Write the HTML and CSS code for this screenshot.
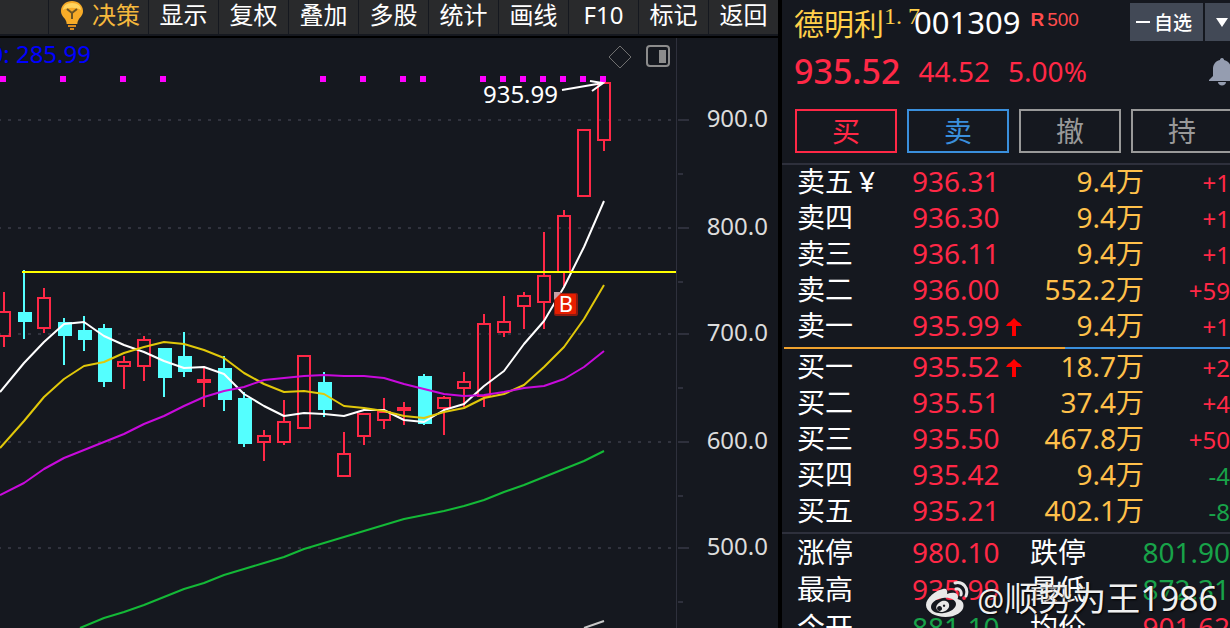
FILE: index.html
```html
<!DOCTYPE html>
<html lang="zh-CN">
<head>
    <meta charset="UTF-8">
    <meta name="viewport" content="width=device-width, initial-scale=1.0">
    <title>德明利 001309</title>
    <link rel="stylesheet" href="styles.css">
</head>
<body>
    <div class="app">
        <main class="chart-pane">
            <nav class="toolbar">
                <span class="toolbar-blank"></span>
                <button class="toolbar-idea">
                    <svg class="bulb" viewBox="0 0 22 30" aria-hidden="true">
                        <path d="M11 1C5 1 0 5 0 11c0 4 2.500 6 4 8 1 1.500 1.500 3 1.700 5h10.600c.2-2 .7-3.500 1.700-5 1.500-2 4-4 4-8C22 5 17 1 11 1z" fill="#f7ab28"/>
                        <path d="M2 10c0-4 3-7 9-7s9 3 9 7c-4-3-14-3-18 0z" fill="#ffd45e"/>
                        <path d="M6 9l5 4 5-4M11 13v6" fill="none" stroke="#6b5424" stroke-width="2"/>
                        <path d="M7 25h8v2H7zM9 28h4v2H9z" fill="#d98a1e"/>
                    </svg>
                    决策
                </button>
                <button>显示</button>
                <button>复权</button>
                <button>叠加</button>
                <button>多股</button>
                <button>统计</button>
                <button>画线</button>
                <button>F10</button>
                <button>标记</button>
                <button>返回</button>
            </nav>

            <svg class="chart" viewBox="0 38 778 590">
                <g class="grid">
                    <path d="M-2 120H676M-2 228H676M-2 334H676M-2 442H676M-2 548H676"/>
                </g>
                <g class="axis">
                    <path d="M676 38V628"/>
                    <path class="tick" d="M678 120h11M678 228h11M678 334h11M678 442h11M678 548h11M678 174h5M678 282h5M678 388h5M678 496h5M678 602h5"/>
                </g>
                <g class="axis-labels">
                    <text x="768" y="127">900.0</text>
                    <text x="768" y="235">800.0</text>
                    <text x="768" y="341">700.0</text>
                    <text x="768" y="449">600.0</text>
                    <text x="768" y="555">500.0</text>
                </g>
                <g id="candles"></g>
                <g id="averages"></g>
                <path class="level-line" d="M22 272H676"/>
                <g id="signals"></g>

                <text class="indicator" x="91" y="63">0: 285.99</text>
                <text class="peak" x="558" y="103">935.99</text>
                <path class="peak-arrow" d="M562 90L603 83M590 81L603 83L592 91"/>

                <path class="tool-icon" d="M620 46L631 57L620 68L609 57z"/>
                <rect class="tool-icon tool-box" x="647" y="46" width="22" height="20" rx="3"/>
                <rect x="659" y="50" width="7" height="13" fill="#8c8c8c"/>

                <rect x="554" y="293" width="24" height="23" rx="2" fill="#8c1a10"/>
                <rect x="555" y="294" width="21" height="20" rx="1" fill="#e61e00"/>
                <path d="M554 292h8l-8 8z" fill="#c8a0a4"/>
                <text class="buy-mark" x="566" y="312">B</text>
            </svg>
        </main>

        <aside class="quote">
            <header class="quote-head">
                <span class="stock-name">德明利<sup>1. 7</sup></span>
                <span class="stock-code">001309</span>
                <span class="badge"><b>R</b>500</span>
                <div class="watch">
                    <button class="watch-btn"><i></i>自选</button>
                    <button class="watch-more" aria-label="更多">
                        <svg viewBox="0 0 12 10"><path d="M0 1h12L6 10z" fill="#fff"/></svg>
                    </button>
                </div>
            </header>
            <div class="quote-price">
                <strong>935.52</strong>
                <span>44.52</span>
                <span>5.00%</span>
                <svg class="bell" viewBox="0 0 26 28" aria-hidden="true">
                    <path d="M13 0c-1.500 0-2 1-2 2-5 1-7 5-7 9v7l-4 4v1h26v-1l-4-4v-7c0-4-2-8-7-9 0-1-.5-2-2-2zM9 24h8c0 2-2 3.500-4 3.500S9 26 9 24z" fill="#959db0"/>
                </svg>
            </div>
            <div class="trade">
                <button class="buy">买</button>
                <button class="sell">卖</button>
                <button>撤</button>
                <button>持</button>
            </div>

            <table class="book">
                <tr><th>卖五<small>¥</small></th><td class="price">936.31</td><td class="vol">9.4万</td><td class="chg">+1</td></tr>
                <tr><th>卖四</th><td class="price">936.30</td><td class="vol">9.4万</td><td class="chg">+1</td></tr>
                <tr><th>卖三</th><td class="price">936.11</td><td class="vol">9.4万</td><td class="chg">+1</td></tr>
                <tr><th>卖二</th><td class="price">936.00</td><td class="vol">552.2万</td><td class="chg">+59</td></tr>
                <tr><th>卖一</th><td class="price">935.99<svg class="up" viewBox="0 0 16 18"><path d="M8 0l2 2 2 2 2 1 2 3h-6v10H6V8H0l2-3 2-1 2-2z"/></svg></td><td class="vol">9.4万</td><td class="chg">+1</td></tr>
            </table>
            <div class="ratio"><span></span></div>
            <table class="book">
                <tr><th>买一</th><td class="price">935.52<svg class="up" viewBox="0 0 16 18"><path d="M8 0l2 2 2 2 2 1 2 3h-6v10H6V8H0l2-3 2-1 2-2z"/></svg></td><td class="vol">18.7万</td><td class="chg">+2</td></tr>
                <tr><th>买二</th><td class="price">935.51</td><td class="vol">37.4万</td><td class="chg">+4</td></tr>
                <tr><th>买三</th><td class="price">935.50</td><td class="vol">467.8万</td><td class="chg">+50</td></tr>
                <tr><th>买四</th><td class="price">935.42</td><td class="vol">9.4万</td><td class="chg down">-4</td></tr>
                <tr><th>买五</th><td class="price">935.21</td><td class="vol">402.1万</td><td class="chg down">-8</td></tr>
            </table>

            <table class="stats">
                <tr><th>涨停</th><td>980.10</td><th>跌停</th><td class="down">801.90</td></tr>
                <tr><th>最高</th><td>935.99</td><th>最低</th><td class="down">872.31</td></tr>
                <tr><th>今开</th><td class="down">881.10</td><th>均价</th><td>901.62</td></tr>
            </table>
        </aside>

        <div class="watermark">
            <svg viewBox="0 0 44 36" aria-hidden="true">
                <path fill="#e8e8e8" fill-rule="evenodd" d="M18 8c3-1 5 1 4 5 5-2 11-2 11 3 0 1-.5 2-.5 2 4 1 6 3 6 7 0 6-8 11-18 11S1 31 1 24C1 17 11 9 18 8zM18 17c-8 1-12 5-12 9s5 7 13 6c7-1 12-5 12-9s-6-7-13-6z"/>
                <path fill="#e8e8e8" fill-rule="evenodd" d="M17 20c5-1 8 2 7 6-1 3-5 5-8 5-4-1-6-4-4-7 1-2 3-3 5-4zM15 25a2.500 2.500 0 1 0 1 4.500 2.500 2.500 0 0 0-1-4.500zM19 23.500a1.200 1.200 0 1 0 .1 0z"/>
                <path fill="none" stroke="#e8e8e8" stroke-width="3" stroke-linecap="round" d="M30 2c8-2 14 5 11 13M31 8c3-1 6 2 5 6"/>
            </svg>
            <span><small>@</small>顺势为王1986</span>
        </div>
    </div>

    <script src="chart.js"></script>
</body>
</html>
```
FILE: styles.css
```css
* {
    box-sizing: border-box;
}
body {
    margin: 0;
    background-color: #000;
    color: #fff;
    font-family: "Noto Sans", "Noto Sans CJK SC", sans-serif;
    font-size: 28px;
}
button {
    font-family: inherit;
    font-weight: inherit;
    color: inherit;
    border: none;
    border-radius: 0;
    padding: 0;
    cursor: pointer;
}
.app {
    position: relative;
    display: grid;
    grid-template-columns: minmax(0, 389fr) minmax(0, 224fr);
    column-gap: 4px;
    height: 100vh;
    overflow: hidden;
}

/* toolbar */
.toolbar {
    display: flex;
    gap: 1px;
    height: 38px;
    padding-bottom: 1px;
    background-color: #15181f;
    border-bottom: 2px solid #000;
}
.toolbar button,
.toolbar-blank {
    height: 34px;
    background-color: #292a2c;
}
.toolbar button {
    flex: 1;
    padding-bottom: 4px;
    font-size: 24px;
    line-height: 30px;
    white-space: nowrap;
}
.toolbar-blank {
    flex: 0 0 48px;
}
.toolbar .toolbar-idea {
    display: flex;
    flex: 0 0 99px;
    align-items: center;
    gap: 9px;
    padding-left: 12px;
    color: #f5b83d;
}
.bulb {
    flex: none;
    width: 22px;
    height: 30px;
}

/* chart */
.chart-pane {
    background-color: #15181f;
}
.chart {
    display: block;
    width: 100%;
    font-size: 24px;
}
.grid path {
    stroke: #31333e;
    stroke-width: 2;
    stroke-dasharray: 3 7;
}
.axis path {
    stroke: #2e303c;
    stroke-width: 1;
    shape-rendering: crispEdges;
}
.axis .tick {
    stroke-width: 2;
}
.axis-labels text {
    fill: #dcdcdc;
    text-anchor: end;
}
.candle {
    fill: none;
    stroke: #ff2846;
    stroke-width: 2;
    shape-rendering: crispEdges;
}
.candle.fall {
    fill: #54ffff;
    stroke: #54ffff;
}
.average {
    fill: none;
    stroke-width: 2;
    stroke-linejoin: round;
}
.level-line {
    stroke: #ffff00;
    stroke-width: 2;
}
.signal {
    fill: #ff00ff;
}
.indicator {
    fill: #0000ff;
    text-anchor: end;
}
.peak {
    fill: #fff;
    text-anchor: end;
}
.peak-arrow {
    fill: none;
    stroke: #fff;
    stroke-width: 2;
}
.tool-icon {
    fill: none;
    stroke: #707070;
    stroke-width: 1;
}
.tool-box {
    stroke: #8c8c8c;
    stroke-width: 2;
}
.buy-mark {
    fill: #fff;
    font-size: 22px;
    text-anchor: middle;
}

/* quote panel */
.quote {
    background-color: #15181f;
    overflow: hidden;
}
.quote-head {
    display: flex;
    align-items: center;
    height: 44px;
    padding-left: 12px;
    white-space: nowrap;
}
.stock-name {
    position: relative;
    color: #ffd04a;
    font-size: 30px;
}
.stock-name sup {
    position: absolute;
    top: 0;
    left: 100%;
    font-family: "Liberation Serif", serif;
    font-size: 24px;
    line-height: 32px;
}
.stock-code {
    margin-left: 30px;
    font-size: 31px;
}
.badge {
    margin: -4px 0 0 10px;
    color: #ff4d4d;
    font-family: "Liberation Sans", sans-serif;
    font-size: 19px;
}
.badge b {
    margin-right: 3px;
}
.watch {
    display: flex;
    gap: 2px;
    margin-left: auto;
    height: 38px;
}
.watch button {
    display: flex;
    align-items: center;
    background-color: #424956;
}
.watch .watch-btn {
    gap: 4px;
    padding: 0 11px 0 6px;
    font-size: 19px;
    font-weight: 500;
}
.watch-btn i {
    width: 14px;
    height: 2px;
    background-color: #fff;
}
.watch-more {
    width: 25px;
}
.watch-more svg {
    width: 12px;
    height: 10px;
    margin-left: 11px;
}
.quote-price {
    display: flex;
    align-items: center;
    gap: 18px;
    height: 54px;
    padding-left: 12px;
    color: #ff2846;
    line-height: 44px;
    white-space: nowrap;
}
.quote-price strong {
    font-size: 34px;
    font-weight: 500;
}
.bell {
    flex: none;
    width: 26px;
    height: 28px;
    margin: 2px -5px 0 auto;
}
.trade {
    display: flex;
    gap: 10px;
    padding: 11px 0 10px 13px;
}
.trade button {
    flex: 0 0 102px;
    height: 44px;
    background: none;
    border: 2px solid #999;
    color: #999;
    font-size: 28px;
    line-height: 40px;
}
.trade .buy {
    border-color: #ff2846;
    color: #ff2846;
}
.trade .sell {
    border-color: #3a8fdc;
    color: #3a8fdc;
}

/* order book */
.book,
.stats {
    width: 100%;
    table-layout: fixed;
    border-collapse: collapse;
    white-space: nowrap;
}
.book th,
.book td,
.stats th,
.stats td {
    padding: 0;
    font-weight: inherit;
    text-align: left;
    vertical-align: top;
}
.trade + .book {
    border-top: 2px solid #2e303c;
}
.book tr {
    height: 36px;
    line-height: 32px;
}
.book th,
.stats th {
    padding-left: 15px;
}
.book th {
    width: 130px;
}
.book small {
    margin-left: 6px;
    font-size: 28px;
}
.book .price {
    width: 112px;
    color: #ff2846;
}
.book .vol {
    width: 120px;
    color: #ffc04a;
    text-align: right;
}
.book .chg {
    color: #ff2846;
    font-size: 24px;
    line-height: 36px;
    text-align: right;
}
.up {
    width: 16px;
    height: 18px;
    margin-left: 6px;
    fill: #ff0000;
}
.ratio {
    height: 2px;
    background-color: #3a8fdc;
    margin: 2px 0 1px 2px;
}
.ratio span {
    display: block;
    width: 63%;
    height: 2px;
    background-color: #f0a22e;
}
.stats {
    margin-top: 2px;
    border-top: 2px solid #2e303c;
    color: #ff2846;
}
.stats tr {
    height: 38px;
    line-height: 36px;
}
.stats th {
    width: 130px;
    color: #fff;
}
.stats th + td + th {
    padding-left: 0;
    width: 100px;
}
.stats td {
    width: 118px;
}
.stats td:last-child {
    width: auto;
    text-align: right;
}
.book .down,
.stats .down {
    color: #18a349;
}

/* watermark laid over the bottom right corner */
.watermark {
    position: absolute;
    right: 12px;
    bottom: 7px;
    display: flex;
    align-items: center;
    gap: 8px;
    color: #f0f0f0;
    font-size: 34px;
    line-height: 42px;
    text-shadow: 1px 1px 2px #000;
    white-space: nowrap;
}
.watermark svg {
    width: 44px;
    height: 36px;
}
.watermark small {
    font-size: 30px;
}
```
FILE: chart.js
```js
const SVG = 'http://www.w3.org/2000/svg';
const STEP = 20;

// high, open/close top, open/close bottom, low, falling
const candles = [
    [292, 311, 337, 347], [270, 312, 322, 339, 1], [288, 297, 329, 333],
    [318, 322, 336, 365, 1], [316, 330, 340, 351, 1], [324, 328, 382, 387, 1],
    [356, 361, 367, 389], [336, 339, 367, 381], [348, 348, 378, 397, 1],
    [332, 356, 372, 377, 1], [366, 379, 383, 407], [356, 368, 400, 411, 1],
    [392, 398, 444, 447, 1], [430, 435, 443, 461], [400, 421, 443, 445],
    [355, 355, 429, 429], [372, 382, 410, 417, 1], [432, 453, 477, 477],
    [413, 413, 437, 445], [398, 411, 421, 429], [402, 407, 411, 425],
    [374, 376, 424, 425, 1], [396, 397, 409, 435], [372, 381, 389, 407],
    [314, 323, 397, 407], [296, 321, 333, 337], [292, 295, 307, 329],
    [232, 275, 303, 329], [210, 215, 273, 288], [129, 129, 197, 197],
    [82, 82, 141, 151]
];

const averages = [
    ['#14b937', 80, 628, 104, 618, 124, 612, 144, 605, 164, 597, 184, 589, 204, 583, 224, 575, 244, 569, 264, 563, 284, 557, 304, 549, 324, 543, 364, 531, 404, 519, 444, 511, 464, 506, 484, 500, 504, 492, 524, 485, 544, 477, 564, 469, 584, 461, 604, 451],
    ['#c8c8c8', 584, 628, 604, 621],
    ['#fff', 0, 392, 24, 363, 44, 342, 64, 324, 84, 322, 104, 336, 124, 345, 144, 352, 164, 361, 184, 368, 204, 367, 224, 374, 244, 394, 264, 406, 284, 416, 304, 413, 324, 414, 344, 416, 364, 410, 384, 410, 404, 420, 424, 422, 444, 410, 464, 404, 484, 386, 504, 371, 524, 344, 544, 321, 564, 287, 584, 247, 604, 201],
    ['#e1c80a', 0, 448, 24, 421, 44, 397, 64, 379, 84, 366, 104, 362, 124, 353, 144, 347, 164, 342, 184, 344, 204, 350, 224, 358, 244, 373, 264, 384, 284, 392, 304, 391, 324, 394, 344, 406, 364, 408, 384, 411, 404, 416, 424, 418, 444, 412, 464, 408, 484, 398, 504, 394, 524, 385, 544, 367, 564, 347, 584, 319, 604, 285],
    ['#c80adc', 0, 495, 24, 483, 44, 469, 64, 458, 84, 450, 104, 442, 124, 434, 144, 424, 164, 416, 184, 406, 204, 397, 224, 391, 244, 387, 264, 380, 284, 378, 304, 376, 324, 375, 344, 376, 364, 376, 384, 378, 404, 384, 424, 389, 444, 394, 464, 396, 484, 395, 504, 392, 524, 388, 544, 386, 564, 379, 584, 367, 604, 351]
];

const signals = [0, 60, 120, 160, 320, 360, 400, 420, 480, 500, 520, 540, 560, 580, 600];

function draw(parent, tag, attrs) {
    const el = document.createElementNS(SVG, tag);
    for (const key in attrs) {
        el.setAttribute(key, attrs[key]);
    }
    document.getElementById(parent).appendChild(el);
}

candles.forEach(([high, top, bottom, low, fall], i) => {
    const x = 4 + i * STEP;
    const left = fall ? x - 5 : x - 6;
    draw('candles', 'path', {
        class: fall ? 'candle fall' : 'candle',
        d: `M${x} ${high}V${top}M${x} ${bottom}V${low}M${left} ${top + 1}h12V${bottom - 1}h-12z`
    });
});

averages.forEach(([color, ...points]) => {
    draw('averages', 'polyline', { class: 'average', stroke: color, points: points.join(' ') });
});

signals.forEach((x) => {
    draw('signals', 'rect', { class: 'signal', x: x, y: 76, width: 6, height: 6 });
});
```
